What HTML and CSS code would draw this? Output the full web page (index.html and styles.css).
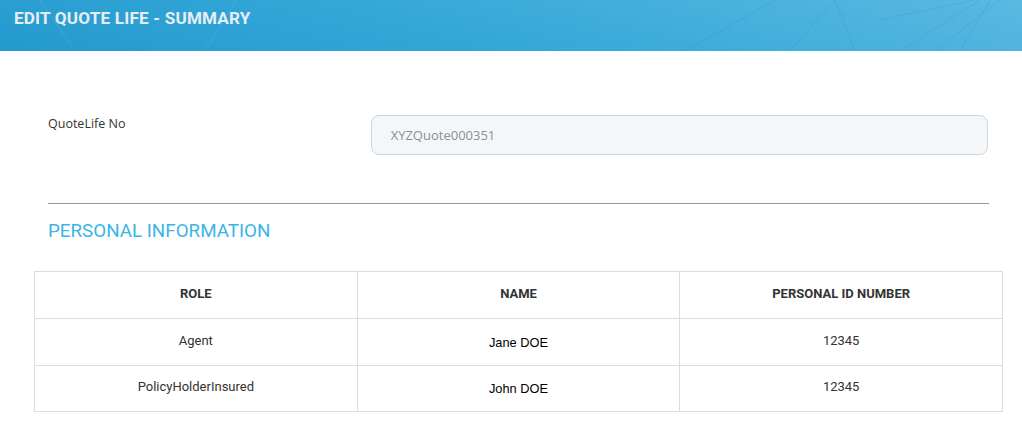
FILE: index.html
```html
<!DOCTYPE html>
<html>
<head>
<meta charset="utf-8">
<link rel="stylesheet" href="styles.css">
</head>
<body>
<header class="topbar">
  <svg class="topbar-lines" width="1022" height="51" viewBox="0 0 1022 51" preserveAspectRatio="none">
    <g fill="none" stroke="rgba(255,255,255,0.10)" stroke-width="1">
      <line x1="40" y1="0" x2="75" y2="51"/>
      <line x1="236" y1="0" x2="205" y2="51"/>
    </g>
    <g fill="none" stroke="rgba(20,110,170,0.12)" stroke-width="1">
      <line x1="775" y1="0" x2="685" y2="51"/>
      <line x1="835" y1="0" x2="790" y2="51"/>
      <line x1="835" y1="0" x2="855" y2="51"/>
      <line x1="980" y1="0" x2="900" y2="51"/>
      <line x1="1000" y1="0" x2="935" y2="51"/>
      <line x1="990" y1="0" x2="960" y2="51"/>
      <line x1="880" y1="20" x2="1022" y2="-10"/>
    </g>
  </svg>
  <h1 class="topbar-title">EDIT QUOTE LIFE - SUMMARY</h1>
</header>
<main class="content">
  <div class="field-row">
    <label class="field-label">QuoteLife No</label>
    <div class="field-input">XYZQuote000351</div>
  </div>
  <hr class="divider">
  <h2 class="section-title">PERSONAL INFORMATION</h2>
</main>
<table class="info-table">
  <thead>
    <tr><th>ROLE</th><th>NAME</th><th>PERSONAL ID NUMBER</th></tr>
  </thead>
  <tbody>
    <tr><td>Agent</td><td class="name">Jane DOE</td><td>12345</td></tr>
    <tr class="last"><td>PolicyHolderInsured</td><td class="name">John DOE</td><td>12345</td></tr>
  </tbody>
</table>
</body>
</html>
```
FILE: styles.css
```css
* { box-sizing: border-box; }
html, body { margin: 0; padding: 0; background: #fff; }
body { font-family: Roboto, "Open Sans", sans-serif; color: #333; width: 1022px; }

.topbar {
  position: relative;
  height: 51px;
  background: linear-gradient(15deg, #2499cd 0%, #35a8d9 45%, #5ab9e1 100%);
  overflow: hidden;
}
.topbar-lines { position: absolute; left: 0; top: 0; }
.topbar-title {
  position: relative;
  margin: 0;
  padding: 8px 0 0 14px;
  font-family: Roboto, sans-serif;
  font-weight: 700;
  font-size: 17.1px;
  letter-spacing: 0.2px;
  line-height: 20px;
  color: #e6eef3;
}

.content { padding: 0 34px 0 48px; }
.field-row {
  display: flex;
  align-items: flex-start;
  padding-top: 64px;
}
.field-label {
  width: 323px;
  font-family: "Open Sans", sans-serif;
  font-size: 12.5px;
  color: #333;
  line-height: 18px;
  padding-top: 0;
}
.field-input {
  width: 618px;
  height: 40px;
  background: #f4f7f9;
  border: 1px solid #d3d6d8;
  border-radius: 8px;
  font-family: "Open Sans", sans-serif;
  font-size: 13px;
  color: #8f8f8f;
  padding: 10px 19px;
  line-height: 18px;
}
.divider {
  margin: 48px 0 0 0;
  width: 941px;
  border: 0;
  border-top: 1px solid #8e9aa2;
  height: 0;
}
.section-title {
  margin: 16px 0 0 0;
  font-family: Roboto, sans-serif;
  font-weight: 400;
  font-size: 18.8px;
  line-height: 22px;
  color: #3ab5e6;
}

.info-table {
  margin: 29px 0 0 34px;
  width: 969px;
  border-collapse: collapse;
  table-layout: fixed;
}
.info-table th, .info-table td {
  border: 1px solid #d8dfe2;
  text-align: center;
  padding: 0 0 4px 0;
  font-family: Roboto, sans-serif;
  font-size: 13px;
  color: #333;
}
.info-table th { font-weight: 700; height: 47px; }
.info-table td { height: 47px; }
.info-table tr.last td { height: 46px; }
.info-table td.name {
  font-family: "Liberation Sans", Arial, sans-serif;
  font-size: 12.8px;
  color: #000;
  padding: 0;
}
```
